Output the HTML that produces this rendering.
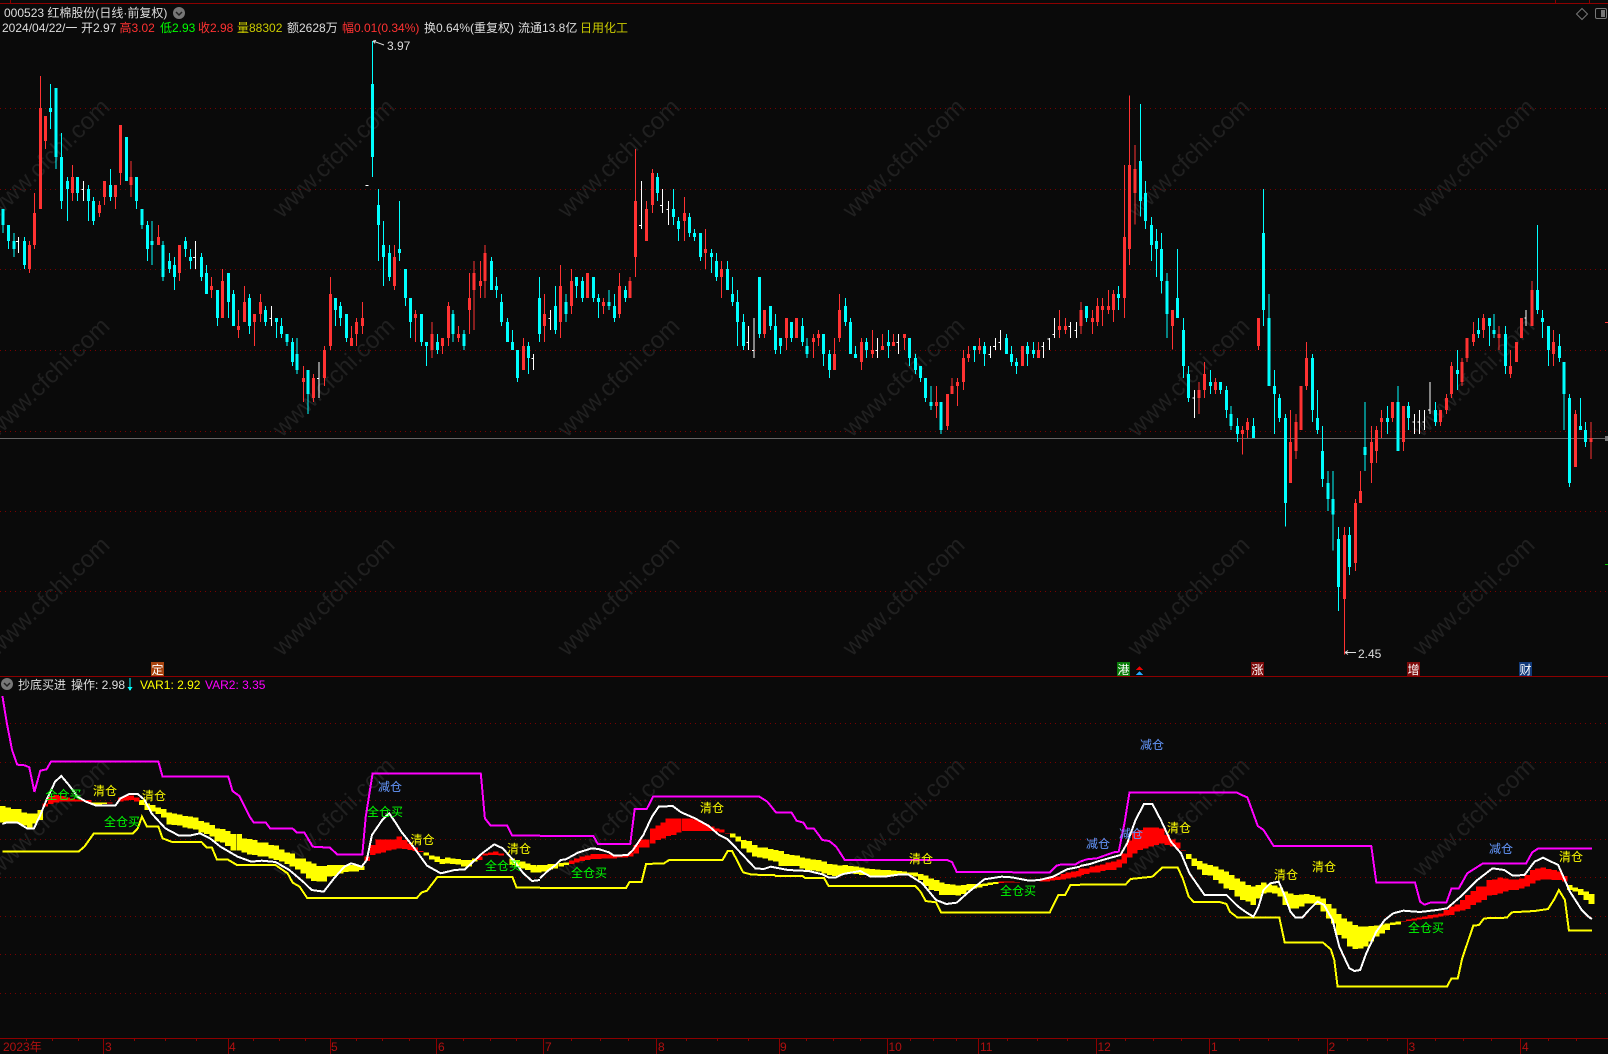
<!DOCTYPE html>
<html><head><meta charset="utf-8"><title>000523</title>
<style>
html,body{margin:0;padding:0;background:#0a0a0a;width:1608px;height:1054px;overflow:hidden}
svg{display:block;overflow:visible}
text{font:12px "Liberation Sans","WenQuanYi Zen Hei","Noto Sans CJK SC",sans-serif}
.n{vector-effect:non-scaling-stroke;fill:none}
.cw{stroke:#0ff;stroke-width:1}.cb{stroke:#0ff;stroke-width:3}
.rw{stroke:#ff3232;stroke-width:1}.rb{stroke:#ff3232;stroke-width:3}
.ww{stroke:#fff;stroke-width:1}
.by{stroke:#ff0;stroke-width:5.5}.br{stroke:#f00;stroke-width:5.5}
.lm{stroke:#f0f;stroke-width:2}.lw{stroke:#fff;stroke-width:2}.ly{stroke:#ff0;stroke-width:2}
.wm text{font:24px "Liberation Sans",sans-serif;fill:#202020}
.g{fill:#0f0}.y{fill:#ff0}.b{fill:#69f}
</style></head><body>
<svg width="1608" height="1054" viewBox="0 0 1608 1054" xmlns="http://www.w3.org/2000/svg" shape-rendering="crispEdges">
<rect width="1608" height="1054" fill="#0a0a0a"/>
<g class="wm" shape-rendering="auto" transform="translate(6,5)">
<text transform="translate(-9,214) rotate(-44)">www.cfchi.com</text><text transform="translate(276,214) rotate(-44)">www.cfchi.com</text><text transform="translate(561,214) rotate(-44)">www.cfchi.com</text><text transform="translate(846,214) rotate(-44)">www.cfchi.com</text><text transform="translate(1131,214) rotate(-44)">www.cfchi.com</text><text transform="translate(1416,214) rotate(-44)">www.cfchi.com</text>
<text transform="translate(-9,433) rotate(-44)">www.cfchi.com</text><text transform="translate(276,433) rotate(-44)">www.cfchi.com</text><text transform="translate(561,433) rotate(-44)">www.cfchi.com</text><text transform="translate(846,433) rotate(-44)">www.cfchi.com</text><text transform="translate(1131,433) rotate(-44)">www.cfchi.com</text><text transform="translate(1416,433) rotate(-44)">www.cfchi.com</text>
<text transform="translate(-9,652) rotate(-44)">www.cfchi.com</text><text transform="translate(276,652) rotate(-44)">www.cfchi.com</text><text transform="translate(561,652) rotate(-44)">www.cfchi.com</text><text transform="translate(846,652) rotate(-44)">www.cfchi.com</text><text transform="translate(1131,652) rotate(-44)">www.cfchi.com</text><text transform="translate(1416,652) rotate(-44)">www.cfchi.com</text>
<text transform="translate(-9,873) rotate(-44)">www.cfchi.com</text><text transform="translate(276,873) rotate(-44)">www.cfchi.com</text><text transform="translate(561,873) rotate(-44)">www.cfchi.com</text><text transform="translate(846,873) rotate(-44)">www.cfchi.com</text><text transform="translate(1131,873) rotate(-44)">www.cfchi.com</text><text transform="translate(1416,873) rotate(-44)">www.cfchi.com</text>
</g>
<!-- grid -->
<path d="M0 108.5H1608M0 189.5H1608M0 269.5H1608M0 350.5H1608M0 431.5H1608M0 511.5H1608M0 591.5H1608M0 723.5H1608M0 762.5H1608M0 800.5H1608M0 839.5H1608M0 877.5H1608M0 916.5H1608M0 954.5H1608M0 993.5H1608" stroke="#7a0000" stroke-dasharray="1 4" fill="none"/>
<path d="M0 438.5H1608" stroke="#666" fill="none"/>
<!-- frame -->
<path d="M0 3.5H1608M0 676.5H1608M0 1038.5H1608M10.5 0V3M1555.5 0V3M1589.5 0V3" stroke="#8c0000" fill="none"/>
<path d="M103.5 1038V1054M228.5 1038V1054M330.5 1038V1054M436.5 1038V1054M543.5 1038V1054M656.5 1038V1054M779.5 1038V1054M887.5 1038V1054M978.5 1038V1054M1096.5 1038V1054M1209.5 1038V1054M1327.5 1038V1054M1407.5 1038V1054M1520.5 1038V1054M26.5 1038V1041M52.5 1038V1041M78.5 1038V1041M134.5 1038V1041M165.5 1038V1041M196.5 1038V1041M253.5 1038V1041M279.5 1038V1041M305.5 1038V1041M356.5 1038V1041M382.5 1038V1041M409.5 1038V1041M463.5 1038V1041M490.5 1038V1041M516.5 1038V1041M571.5 1038V1041M600.5 1038V1041M628.5 1038V1041M686.5 1038V1041M717.5 1038V1041M748.5 1038V1041M806.5 1038V1041M833.5 1038V1041M860.5 1038V1041M910.5 1038V1041M933.5 1038V1041M956.5 1038V1041M1007.5 1038V1041M1037.5 1038V1041M1067.5 1038V1041M1125.5 1038V1041M1153.5 1038V1041M1181.5 1038V1041M1239.5 1038V1041M1268.5 1038V1041M1298.5 1038V1041M1347.5 1038V1041M1367.5 1038V1041M1387.5 1038V1041M1435.5 1038V1041M1463.5 1038V1041M1491.5 1038V1041M1548.5 1038V1041M1576.5 1038V1041" stroke="#8c0000" fill="none"/>

<!-- candles part 1 -->
<svg x="0" y="60" width="540" height="370" viewBox="0 0 1568 1110" preserveAspectRatio="none">
<path class="n cw" d="M8 447V519M24 495V567M40 519V591M71 531V627M146 72V207M163 84V327M178 219V447M196 351V483M225 351V423M257 375V483M271 411V495M321 327V423M367 231V363M396 351V447M413 447V507M428 483V603M442 483V615M474 543V663M492 579V639M506 591V690M538 531V591M553 567V627M585 579V663M599 615V702M631 690V798M663 639V774M678 690V798M724 702V822M771 738V798M803 774V834M817 774V834M834 822V858M849 834V918M863 834V942M895 930V1062M974 714V798M988 726V798M1006 762V846M1081 -57V351M1099 387V603M1113 483V678M1131 555V663M1160 423V603M1177 627V738M1192 714V834M1224 762V858M1238 846V918M1270 822V882M1316 750V846M1348 810V870M1427 591V690M1441 651V714M1456 702V798M1473 774V846M1488 810V870M1502 870V966M1534 846V942M1566 651V846"/>
<path class="n cb" d="M8 447V495M24 495V543M40 543V567M71 543V615M146 144V156M163 84V291M178 291V423M196 363V387M225 351V399M257 387V423M271 423V483M321 375V411M367 231V363M396 351V423M413 447V495M428 495V567M442 543V555M474 555V651M492 603V627M506 615V651M538 543V567M553 591V603M585 591V651M599 639V702M631 690V774M663 639V726M678 702V798M724 714V798M771 750V786M803 774V786M817 798V822M834 822V846M849 846V906M863 882V930M895 930V1002M974 714V750M988 738V774M1006 762V834M1081 72V291M1099 435V495M1113 555V591M1131 579V651M1160 567V579M1177 627V714M1192 714V786M1224 762V846M1238 846V858M1270 846V870M1316 762V822M1348 822V858M1427 603V690M1441 678V690M1456 726V786M1473 786V846M1488 846V870M1502 870V954M1534 858V894M1566 714V822"/>
<path class="n rw" d="M85 543V639M100 399V567M117 48V447M132 168V267M210 315V423M289 423V471M303 363V435M335 375V447M350 195V375M381 303V411M460 495V555M521 555V663M614 651V714M646 627V774M692 750V834M710 678V786M739 762V858M756 702V786M881 918V1026M910 942V1026M942 858V978M959 651V870M1020 798V858M1035 774V858M1052 726V822M1145 555V690M1206 750V846M1255 786V894M1285 834V882M1302 726V858M1331 798V846M1363 639V822M1377 603V810M1395 603V714M1409 555V714M1520 834V930"/>
<path class="n rb" d="M85 555V627M100 459V555M117 144V447M132 168V243M210 351V399M289 435V459M303 363V411M335 375V411M350 195V339M381 351V375M460 531V555M521 555V639M614 678V690M646 663V774M692 798V810M710 726V786M739 762V786M756 726V762M881 954V966M910 954V1014M942 870V954M959 702V858M1020 834V858M1035 786V822M1052 774V798M1145 591V678M1206 762V774M1255 822V870M1285 834V858M1302 738V834M1331 822V834M1363 714V750M1377 639V690M1395 663V678M1409 579V663M1520 858V930"/>
<path class="n ww" d="M53 531V579M47 544H53M242 363V423M236 388H242M567 543V627M561 592H567M788 738V798M782 775H788M927 906V1014M921 955H927M1062 376H1070M1549 882V930M1543 895H1549"/>
</svg>
<!-- candles part 2 -->
<svg x="540" y="130" width="540" height="320" viewBox="0 0 1568 960" preserveAspectRatio="none">
<path class="n cw" d="M45 468V612M76 492V576M106 441V504M123 441V516M155 441V516M170 492V564M201 480V540M216 492V576M248 468V516M341 129V213M387 177V285M402 261V333M434 249V321M448 297V333M466 309V393M498 357V429M512 369V453M544 393V480M559 441V528M573 480V648M591 552V660M637 441V624M669 528V600M684 552V672M698 624V672M730 576V636M762 564V648M776 624V684M823 612V708M840 660V744M887 504V588M902 564V672M916 648V684M948 624V684M1012 600V684M1073 624V708M1090 672V732M1105 708V756M1119 744V816M1136 768V840M1165 816V912M1261 648V696M1290 636V708M1354 612V672M1369 648V708M1383 684V732M1415 636V708M1433 636V684"/>
<path class="n cb" d="M45 528V600M76 516V552M106 441V468M123 453V504M155 441V504M170 504V516M201 516V528M216 528V564M248 480V504M341 141V189M387 237V261M402 273V297M434 261V309M448 309V321M466 309V381M498 369V381M512 393V441M544 417V480M559 492V516M573 516V576M591 576V648M637 441V612M669 528V588M684 588V660M698 624V648M730 576V624M762 588V636M776 648V672M823 612V672M840 672V720M887 528V576M902 576V672M916 672V684M948 636V660M1012 636V648M1073 624V684M1090 684V720M1105 708V744M1119 744V804M1136 816V828M1165 816V900M1261 648V660M1290 648V672M1354 624V672M1369 672V696M1383 696V708M1415 648V672M1433 660V672"/>
<path class="n rw" d="M13 492V636M60 405V624M91 417V552M138 429V504M184 504V552M231 429V564M262 441V504M277 57V441M309 213V333M326 117V249M419 201V333M480 297V417M527 393V504M652 540V624M716 564V660M745 564V624M794 612V684M809 600V648M855 624V720M869 492V636M934 624V720M965 600V684M994 612V660M1026 612V648M1058 612V660M1151 768V864M1183 792V900M1197 744V792M1212 744V828M1229 660V780M1244 648V696M1276 624V672M1401 648V708M1447 636V684M1508 540V624M1526 564V612"/>
<path class="n rb" d="M13 552V588M60 468V576M91 453V528M138 429V504M184 516V528M231 468V552M262 453V504M277 213V381M309 237V333M326 129V225M419 249V273M480 357V369M527 417V441M652 540V612M716 564V624M745 564V624M794 624V636M809 612V624M855 672V720M869 540V624M934 636V696M965 660V672M994 648V660M1026 636V648M1058 612V624M1151 816V828M1183 792V888M1197 768V792M1212 756V768M1229 684V756M1244 672V684M1276 648V660M1401 648V708M1447 660V684M1508 588V600M1526 588V600"/>
<path class="n ww" d="M30 540V600M24 565H30M294 153V297M288 287H294M355 177V249M349 227H355M373 213V285M367 239H373M605 588V660M599 637H605M622 564V684M616 662H622M980 624V684M974 662H980M1041 612V672M1035 637H1041M1308 648V684M1302 673H1308M1322 624V660M1316 649H1322M1337 600V660M1331 637H1337M1462 636V684M1456 649H1462M1479 624V660M1473 627H1479M1494 564V624M1488 613H1494M1540 576V624M1534 589H1540M1558 576V624M1552 601H1558"/>
</svg>
<!-- candles part 3 -->
<svg x="1080" y="90" width="528" height="600" viewBox="0 0 1568 1568" preserveAspectRatio="none">
<path class="n cw" d="M19 564V606M114 512V575M179 37V331M194 238V363M212 332V447M227 363V489M242 374V532M259 478V648M289 416V596M307 596V752M322 721V815M387 732V794M417 763V794M435 773V857M449 826V888M467 857V920M515 857V909M545 259V617M562 533V774M577 732V899M592 794V868M610 847V1141M690 690V868M705 784V899M720 878V1037M737 996V1100M752 996V1204M767 1142V1362M800 1142V1267M847 815V996M913 826V899M945 774V943M975 815V889M1055 815V878M1121 680V784M1183 596V648M1216 596V669M1230 585V648M1263 617V742M1358 353V585M1373 575V648M1391 617V721M1424 638V711M1438 711V889M1453 794V1037M1486 805V889M1501 868V933"/>
<path class="n cb" d="M19 564V596M114 533V544M179 186V290M194 269V342M212 353V405M227 395V416M242 416V499M259 499V585M289 544V596M307 627V721M322 742V805M387 763V773M417 763V784M435 784V836M449 847V878M467 878V899M515 878V909M545 374V575M562 596V774M577 774V794M592 805V857M610 857V1079M690 700V836M705 857V889M720 943V1016M737 1027V1069M752 1069V1110M767 1173V1299M800 1163V1247M847 933V954M913 857V868M945 815V943M975 826V857M1055 836V868M1121 732V742M1183 627V638M1216 596V617M1230 627V638M1263 638V721M1358 523V575M1373 596V606M1391 617V680M1424 669V700M1438 711V794M1453 805V1027M1486 878V889M1501 889V920"/>
<path class="n rw" d="M3 554V638M37 575V638M52 544V617M67 544V617M85 523V585M99 523V606M132 196V596M147 15V457M164 144V352M274 575V678M354 763V847M369 711V805M402 753V794M482 878V953M497 857V909M530 596V679M625 836V1027M642 847V964M657 774V889M672 659V784M785 1142V1475M818 1069V1257M833 996V1079M865 878V1027M880 878V975M895 836V909M928 815V868M960 826V943M1070 836V878M1088 794V847M1103 711V805M1135 700V773M1150 648V711M1168 606V669M1198 585V648M1245 617V680M1278 680V752M1296 659V711M1311 596V648M1343 499V617M1406 627V721M1471 836V985M1518 868V964"/>
<path class="n rb" d="M3 575V617M37 596V606M52 564V606M67 564V575M85 564V575M99 533V575M132 384V544M147 196V415M164 206V269M274 575V617M354 784V805M369 742V784M402 763V784M482 889V899M497 868V889M530 596V669M625 920V1027M642 868V943M657 774V889M672 700V774M785 1163V1330M818 1079V1236M833 1048V1079M865 920V975M880 889V943M895 857V868M928 815V857M960 826V920M1070 836V868M1088 805V836M1103 721V794M1135 711V763M1150 648V700M1168 638V659M1198 596V627M1245 638V648M1278 721V742M1296 659V711M1311 596V648M1343 523V617M1406 659V690M1471 847V985M1518 910V920"/>
<path class="n ww" d="M340 784V857M334 805H340M993 847V899M987 868H993M1008 836V899M1002 868H1008M1023 836V889M1017 868H1023M1040 763V847M1034 836H1040M1325 575V617M1320 596H1325"/>
</svg>

<!-- lower part 1 -->
<svg x="0" y="660" width="540" height="394" viewBox="0 0 1568 1182" preserveAspectRatio="none">
<path class="n by" d="M8 438V487M24 443V487M40 447V490M55 447V490M71 458V497M86 461V503M101 461V490M117 450V480M272 428V435M288 428V436M303 428V432M412 420V435M428 430V450M444 435V455M460 442V462M475 447V473M491 457V493M506 460V495M522 463V497M538 468V503M553 470V505M569 473V508M584 483V517M600 488V522M616 495V530M631 505V545M647 507V547M662 513V558M678 522V572M694 522V572M709 535V578M725 537V583M740 540V585M756 547V590M771 547V590M787 555V595M802 557V600M818 568V605M834 578V612M849 580V620M865 595V628M880 595V640M896 605V655M911 610V663M927 618V665M942 618V665M958 615V650M973 615V648M989 615V640M1004 615V636M1020 615V635M1035 615V635M1051 618V630M1238 578V587M1253 587V598M1269 590V606M1284 597V612M1300 592V610M1315 595V612M1331 597V613M1347 600V620M1362 600V620M1378 595V605M1487 595V615M1502 600V620M1518 605V625M1533 610V630M1549 615V638M1565 620V638"/>
<path class="n br" d="M132 430V440M148 408V432M163 405V428M179 408V425M195 412V425M210 415V425M226 418V425M241 420V425M257 420V428M319 428V431M350 412V425M366 408V422M381 407V420M397 412V425M1067 590V603M1082 555V585M1098 538V580M1113 538V578M1129 538V572M1144 538V568M1160 530V565M1175 540V567M1191 550V570M1206 563V573M1222 573V576M1393 590V600M1409 580V587M1425 577V585M1440 575V585M1456 580V587"/>
<path class="n lm" d="M7 108L20 190L35 270L50 314L72 316L85 322L100 396L117 332L135 328L148 305L460 305L472 350L663 350L675 393L695 408L725 470L737 488L772 488L785 506L850 506L862 518L884 518L908 560L958 563L980 584L1052 584L1062 470L1082 340L1396 340L1408 475L1425 497L1473 497L1487 527L1568 527"/>
<path class="n ly" d="M7 575L228 575L245 560L272 521L385 521L400 505L412 470L427 500L460 500L472 535L500 546L585 546L600 562L615 562L630 599L662 599L688 615L800 615L835 640L850 668L870 680L892 714L1210 714L1225 697L1240 692L1270 651L1488 651L1500 683L1568 683"/>
<path class="n lw" d="M7 492L20 487L50 487L80 506L98 506L115 470L135 420L160 365L178 348L200 375L225 410L250 425L280 437L335 437L350 415L375 402L400 402L420 420L440 460L480 505L520 527L550 527L580 520L610 535L640 560L690 590L730 605L760 602L800 606L840 630L880 665L905 690L940 695L970 655L1000 620L1020 610L1050 620L1065 600L1080 525L1110 480L1130 460L1150 490L1165 515L1200 560L1240 617L1280 640L1320 630L1350 628L1400 580L1435 553L1460 565L1490 600L1520 640L1545 663L1568 660"/>
</svg>
<!-- lower part 2 -->
<svg x="540" y="760" width="540" height="294" viewBox="0 0 1568 882" preserveAspectRatio="none">
<path class="n by" d="M-2 315V335M14 315V335M30 312V328M45 312V325M61 309V320M76 308V315M560 220V232M575 230V245M592 240V265M607 243V277M623 255V290M638 262V293M654 263V295M670 267V302M685 270V305M700 273V318M716 282V318M731 285V318M747 287V318M762 292V326M778 295V330M794 299V332M810 300V335M825 305V340M841 312V345M856 313V348M872 316V345M887 315V340M903 318V340M918 320V342M934 322V345M949 325V345M965 327V350M980 329V352M996 330V350M1011 330V347M1027 332V347M1043 333V347M1058 335V345M1073 337V345M1089 338V350M1105 342V360M1120 347V378M1136 355V390M1152 360V393M1167 367V405M1183 372V405M1199 373V405M1214 377V407M1230 375V402M1246 372V392M1261 372V385M1277 372V382M1293 370V378M1308 368V375M1324 366V372"/>
<path class="n br" d="M92 302V312M107 295V307M123 290V303M138 287V300M154 282V297M170 282V297M185 282V295M201 284V295M216 286V295M232 287V293M247 285V292M263 278V290M279 255V280M294 238V262M310 238V262M327 205V250M343 197V240M358 187V235M373 175V228M388 175V225M403 175V218M420 175V213M436 175V213M451 178V213M467 185V213M483 192V213M498 200V213M513 205V215M528 208V217M545 219V221M1339 365V369M1355 365V368M1370 365V368M1386 367V369M1458 358V365M1473 355V365M1488 352V362M1503 350V360M1519 342V358M1534 338V355M1550 335V352M1565 333V350"/>
<path class="n lm" d="M0 228L155 228L168 252L262 252L275 147L310 147L328 110L637 110L660 125L685 157L730 157L745 182L765 188L775 205L795 205L820 240L840 243L860 260L885 300L1183 300L1197 307L1210 336L1370 336L1375 338L1480 338L1500 317L1515 313L1555 313L1568 305"/>
<path class="n ly" d="M0 384L250 384L260 366L295 366L308 312L360 310L375 300L530 300L545 273L558 273L590 337L615 344L680 345L685 348L762 348L770 354L825 354L838 378L1090 378L1105 395L1120 423L1150 427L1165 458L1480 458L1505 405L1525 405L1540 375L1568 375"/>
<path class="n lw" d="M0 355L20 335L45 315L60 300L75 298L110 278L150 265L170 267L200 277L215 287L255 285L270 270L300 225L325 170L345 140L385 138L410 157L450 175L490 198L520 225L545 238L575 270L625 325L650 327L670 320L720 330L780 333L820 343L840 353L860 352L880 342L930 333L960 350L1000 350L1040 344L1070 344L1110 370L1150 420L1180 432L1210 428L1240 400L1290 358L1340 350L1370 352L1420 362L1450 360L1490 350L1530 328L1568 320"/>
</svg>
<!-- lower part 3 -->
<svg x="1080" y="720" width="528" height="334" viewBox="0 0 1568 1002" preserveAspectRatio="none">
<path class="n br" d="M4 445V465M20 445V462M36 440V458M52 437V457M68 433V453M84 428V450M100 425V450M116 418V442M132 400V430M148 362V412M163 335V400M179 330V390M195 323V385M211 322V380M227 322V375M243 325V370M259 345V375M275 358V380M291 368V385M307 390V392M961 603V605M977 598V603M992 595V601M1008 592V598M1024 590V597M1040 585V595M1056 583V592M1072 580V590M1088 570V587M1104 560V585M1120 553V575M1136 540V572M1152 525V567M1168 513V555M1184 500V548M1200 500V540M1216 480V527M1232 478V525M1248 472V520M1264 475V515M1280 478V510M1296 478V510M1312 475V505M1328 465V500M1344 450V490M1360 445V482M1376 443V478M1392 447V478M1408 450V480M1424 455V480M1440 468V485"/>
<path class="n by" d="M323 402V417M339 415V438M355 423V448M371 430V465M387 435V467M403 440V480M419 448V490M435 455V505M451 465V510M467 475V530M483 485V540M499 495V545M514 500V555M530 495V535M546 488V520M562 493V518M578 497V520M594 503V530M610 515V555M626 520V565M642 525V565M658 523V560M674 522V550M690 525V550M706 530V555M722 535V575M738 552V595M753 565V610M769 582V645M785 595V655M801 605V680M817 615V687M833 620V685M849 620V680M865 618V665M881 616V650M897 613V640M913 610V630M929 607V615M945 605V613M1455 495V510M1471 502V515M1487 507V525M1503 515V540M1519 522V552"/>
<path class="n lm" d="M0 425L20 418L50 415L100 397L115 395L132 310L147 217L465 217L480 225L497 232L528 318L545 330L575 378L865 378L880 488L995 488L1010 545L1023 554L1040 548L1088 548L1103 506L1125 505L1150 460L1197 430L1325 430L1343 397L1360 386L1520 386"/>
<path class="n ly" d="M0 494L135 494L150 477L215 470L245 442L290 442L305 475L323 530L338 546L415 546L435 552L445 575L468 593L592 593L608 668L722 668L745 688L755 720L765 800L1090 800L1103 775L1122 775L1135 715L1168 617L1185 615L1200 595L1268 593L1282 577L1350 573L1390 567L1410 535L1422 510L1440 540L1452 632L1520 632"/>
<path class="n lw" d="M0 438L30 432L60 422L120 405L140 370L165 300L190 252L215 252L240 300L270 365L300 400L325 460L370 525L435 525L470 560L495 578L515 590L530 560L545 510L565 490L590 485L605 520L625 575L640 593L660 593L680 570L705 545L725 555L750 600L770 680L800 745L815 753L832 750L850 700L880 635L905 600L930 580L960 572L1010 576L1060 570L1090 565L1130 530L1180 480L1225 445L1260 450L1285 467L1320 465L1350 425L1375 413L1420 435L1455 515L1490 570L1510 590L1520 597"/>
</svg>

<!-- header -->
<text x="4" y="17" fill="#ddd">000523 红棉股份(日线·前复权)</text>
<g shape-rendering="auto"><circle cx="179" cy="13" r="6" fill="#777"/><path d="M176 12l3 3 3-3" stroke="#222" stroke-width="1.5" fill="none"/></g>
<text x="2" y="32" fill="#ddd">2024/04/22/一</text>
<text x="81" y="32" fill="#ddd">开2.97</text>
<text x="119.500" y="32" fill="#ff3232">高3.02</text>
<text x="160" y="32" fill="#0f0">低2.93</text>
<text x="198" y="32" fill="#ff3232">收2.98</text>
<text x="237" y="32" fill="#cc0">量88302</text>
<text x="287" y="32" fill="#ddd">额2628万</text>
<text x="342" y="32" fill="#ff3232">幅0.01(0.34%)</text>
<text x="424" y="32" fill="#ddd">换0.64%(重复权)</text>
<text x="518" y="32" fill="#ddd">流通13.8亿</text>
<text x="580" y="32" fill="#cc0">日用化工</text>
<g shape-rendering="auto"><path d="M1582 8.500l5.500 5.500-5.500 5.500-5.500-5.500z" fill="none" stroke="#777"/><rect x="1595.500" y="8.500" width="11" height="10" rx="1.500" fill="none" stroke="#777"/><rect x="1601" y="10" width="4" height="7" fill="#777"/></g>

<!-- price labels -->
<g shape-rendering="auto" stroke="#ddd" fill="none"><path d="M373 41L384 45M373 41l3 -0.500M373 41l2 2.500"/><path d="M1345 652.500H1356M1345 652.500l3 -2M1345 652.500l3 2"/></g>
<text x="387" y="50" fill="#ddd">3.97</text>
<text x="1358" y="658" fill="#ddd">2.45</text>

<!-- right ticks -->
<path d="M1605 322.500H1608" stroke="#ff3232"/><path d="M1605 564.500H1608" stroke="#0c0"/><rect x="1605" y="436" width="3" height="5" fill="#777"/>

<!-- tags -->
<rect x="151" y="662" width="13" height="14" fill="#a8440f"/><text x="151.500" y="674" fill="#fff" font-size="12">定</text>
<rect x="1117" y="662" width="13" height="14" fill="#0a7d0a"/><text x="1117.500" y="674" fill="#fff">港</text>
<path d="M1139.500 666l3.500 4h-7z" fill="#e00"/><path d="M1139.500 671l3.500 4h-7z" fill="#2af"/>
<rect x="1251" y="662" width="13" height="14" fill="#7d0a0a"/><text x="1251.500" y="674" fill="#fff">涨</text>
<rect x="1407" y="662" width="13" height="14" fill="#7d0a0a"/><text x="1407.500" y="674" fill="#fff">增</text>
<rect x="1519" y="662" width="13" height="14" fill="#123a7a"/><text x="1519.500" y="674" fill="#fff">财</text>

<!-- indicator legend -->
<g shape-rendering="auto"><circle cx="7" cy="684" r="6" fill="#777"/><path d="M4 683l3 3 3-3" stroke="#222" stroke-width="1.500" fill="none"/></g>
<text x="18" y="689" fill="#ddd">抄底买进</text>
<text x="71" y="689" fill="#ddd">操作: 2.98</text>
<path d="M130 678V688" stroke="#0ff"/><path d="M127.500 687h5l-2.500 4z" fill="#0ff"/>
<text x="140" y="689" class="y">VAR1: 2.92</text>
<text x="205" y="689" fill="#f0f">VAR2: 3.35</text>

<!-- signals -->
<g>
<text x="45.500" y="799" class="g">全仓买</text>
<text x="93" y="795" class="y">清仓</text>
<text x="142" y="800" class="y">清仓</text>
<text x="104" y="826" class="g">全仓买</text>
<text x="378" y="791" class="b">减仓</text>
<text x="367" y="816" class="g">全仓买</text>
<text x="410.500" y="844" class="y">清仓</text>
<text x="507" y="853" class="y">清仓</text>
<text x="485" y="870" class="g">全仓买</text>
<text x="571" y="877" class="g">全仓买</text>
<text x="700" y="812" class="y">清仓</text>
<text x="909" y="863" class="y">清仓</text>
<text x="1000" y="895" class="g">全仓买</text>
<text x="1140" y="749" class="b">减仓</text>
<text x="1086" y="848" class="b">减仓</text>
<text x="1119" y="838" class="b">减仓</text>
<text x="1167" y="832" class="y">清仓</text>
<text x="1274" y="879" class="y">清仓</text>
<text x="1312" y="871" class="y">清仓</text>
<text x="1408" y="932" class="g">全仓买</text>
<text x="1489" y="853" class="b">减仓</text>
<text x="1559" y="861" class="y">清仓</text>
</g>

<!-- axis labels -->
<g fill="#b01010">
<text x="3" y="1051">2023年</text><text x="105" y="1051">3</text><text x="229" y="1051">4</text><text x="331" y="1051">5</text><text x="438" y="1051">6</text><text x="545" y="1051">7</text><text x="658" y="1051">8</text><text x="780" y="1051">9</text><text x="888.500" y="1051">10</text><text x="980" y="1051">11</text><text x="1097.500" y="1051">12</text><text x="1211" y="1051">1</text><text x="1328.500" y="1051">2</text><text x="1408.500" y="1051">3</text><text x="1522" y="1051">4</text>
</g>
</svg>
</body></html>
